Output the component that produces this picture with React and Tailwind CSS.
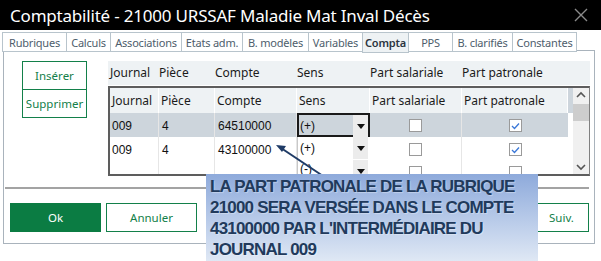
import React from "react";

const tabs = [
  { label: "Rubriques", w: 65 },
  { label: "Calculs", w: 45 },
  { label: "Associations", w: 72 },
  { label: "Etats adm.", w: 62 },
  { label: "B. modèles", w: 67 },
  { label: "Variables", w: 55 },
  { label: "Compta", w: 47, active: true },
  { label: "PPS", w: 45 },
  { label: "B. clarifiés", w: 61 },
  { label: "Constantes", w: 65 },
];

const cols = [
  { label: "Journal", w: 49 },
  { label: "Pièce", w: 56 },
  { label: "Compte", w: 82 },
  { label: "Sens", w: 73 },
  { label: "Part salariale", w: 92 },
  { label: "Part patronale", w: 106 },
];

const rows = [
  { journal: "009", piece: "4", compte: "64510000", sens: "(+)", sal: false, pat: true, selected: true },
  { journal: "009", piece: "4", compte: "43100000", sens: "(+)", sal: false, pat: true },
  { journal: "", piece: "", compte: "", sens: "(-)", sal: false, pat: false, partial: true },
];

const Check = ({ checked }) => (
  <div className="w-[13px] h-[13px] border border-[#9a9a9a] bg-white flex items-center justify-center">
    {checked && (
      <svg width="9" height="8" viewBox="0 0 9 8">
        <path d="M1 4 L3.5 6.5 L8 1.5" stroke="#3b78d8" strokeWidth="1.3" fill="none" />
      </svg>
    )}
  </div>
);

const DropBtn = () => (
  <div className="w-[15px] h-[22px] bg-[#ececec] flex items-center justify-center">
    <svg width="8" height="5" viewBox="0 0 8 5">
      <path d="M0 0 L8 0 L4 5 Z" fill="#111" />
    </svg>
  </div>
);

export default function App() {
  return (
    <div className="relative w-[601px] h-[261px] bg-white overflow-hidden font-['Noto_Sans',sans-serif]">
      {/* Barre de titre */}
      <div className="h-[30px] bg-black flex items-center justify-between pl-[10px] pr-[13px]">
        <span className="text-white text-[17px] tracking-[-0.2px] leading-none">
          Comptabilité - 21000 URSSAF Maladie Mat Inval Décès
        </span>
        <svg width="14" height="14" viewBox="0 0 14 14">
          <path d="M1 1 L13 13 M13 1 L1 13" stroke="#8a8a8a" strokeWidth="1.4" />
        </svg>
      </div>

      {/* Onglets */}
      <div className="flex pl-[2px] pt-[2px] h-[22px]">
        {tabs.map((t) => (
          <div
            key={t.label}
            style={{ width: t.w }}
            className={`border border-[#b8c4cc] -ml-px first:ml-0 flex items-center justify-center text-[11px] tracking-[-0.2px] leading-none whitespace-nowrap ${
              t.active ? "bg-[#eef2f4] font-semibold text-[#2b3440] h-[21px]" : "bg-white text-[#4e5d6c] h-[20px]"
            }`}
          >
            {t.label}
          </div>
        ))}
      </div>

      {/* Panneau */}
      <div className="ml-[3px] w-[592px] h-[194px] border border-[#a9b3bc] -mt-[2px]">
        <div className="flex pt-[10px]">
          <div className="ml-[18px] flex flex-col">
            <div className="w-[65px] h-[29px] border border-[#13804a] flex items-center justify-center text-[11.5px] text-[#13804a]">
              Insérer
            </div>
            <div className="w-[65px] h-[28px] border border-[#13804a] border-t-0 flex items-center justify-center text-[11.5px] text-[#13804a]">
              Supprimer
            </div>
          </div>

          {/* Grille */}
          <div className="ml-[21px] w-[482px]">
            <div className="flex h-[24px] bg-[#eef2f4] text-[12px] text-[#1b1b1b]">
              {cols.map((c) => (
                <div key={c.label} style={{ width: c.w }} className="flex items-center px-[2px]">
                  {c.label}
                </div>
              ))}
            </div>
            <div className="h-[90px] border-t-2 border-l-2 border-b-2 border-[#5d5d5d] border-r border-r-[#808080] flex mt-px">
              <div className="flex-1 flex flex-col">
                <div className="flex h-[26px] bg-[#eef2f4] text-[12px] text-[#1b1b1b]">
                  {cols.map((c) => (
                    <div key={c.label} style={{ width: c.w }} className="flex items-center px-[2px] border-r border-white">
                      {c.label}
                    </div>
                  ))}
                  <div className="flex-1 bg-[#cdd5dc]" />
                </div>
                {rows.map((r, i) => (
                  <div
                    key={i}
                    className={`flex text-[12px] font-['Liberation_Sans',sans-serif] text-[#111] ${
                      r.partial ? "h-[14px] overflow-hidden" : "h-[24px]"
                    } ${r.selected ? "bg-[#cdd5dc]" : "bg-white"}`}
                  >
                    <div className="w-[49px] pl-[2px] pt-[4px] border-r border-[#e6e6e6]">{r.journal}</div>
                    <div className="w-[56px] pl-[3px] pt-[4px] border-r border-[#e6e6e6]">{r.piece}</div>
                    <div className="w-[82px] pl-[3px] pt-[4px] border-r border-[#e6e6e6]">{r.compte}</div>
                    <div
                      className={`w-[73px] flex justify-between items-start ${
                        r.selected ? "border-2 border-[#1a1a1a]" : "border-l border-[#c8c8c8] pl-px pr-[2px]"
                      }`}
                    >
                      <span className={`pl-px ${r.partial ? "pt-0" : "pt-[2px]"}`}>{r.sens}</span>
                      <DropBtn />
                    </div>
                    <div className="w-[92px] flex justify-center pt-[6px] border-r border-[#e6e6e6]">
                      <Check checked={r.sal} />
                    </div>
                    <div className="w-[106px] flex justify-center pt-[6px]">
                      <Check checked={r.pat} />
                    </div>
                    <div className="flex-1 bg-white" />
                  </div>
                ))}
              </div>
              {/* Barre de défilement */}
              <div className="w-[16px] bg-[#f0f0f0] flex flex-col items-center justify-between py-[3px]">
                <div className="flex flex-col items-center w-full">
                  <svg width="10" height="7" viewBox="0 0 10 7">
                    <path d="M1 6 L5 2 L9 6" stroke="#555" strokeWidth="1.6" fill="none" />
                  </svg>
                  <div className="w-full h-[17px] bg-[#cdcdcd] mt-[6px]" />
                </div>
                <svg width="10" height="7" viewBox="0 0 10 7">
                  <path d="M1 1 L5 5 L9 1" stroke="#555" strokeWidth="1.6" fill="none" />
                </svg>
              </div>
            </div>
          </div>
        </div>

        {/* Séparateur */}
        <div className="mx-[1px] mt-[11px] h-[2px] bg-[#a3a3a3] w-[584px]" />

        {/* Boutons */}
        <div className="flex mt-[14px] pl-[6px]">
          <div className="w-[91px] h-[29px] bg-[#0b7c43] text-white text-[11.5px] flex items-center justify-center">
            Ok
          </div>
          <div className="ml-[5px] w-[91px] h-[29px] border border-[#13804a] text-[#13804a] text-[11.5px] flex items-center justify-center">
            Annuler
          </div>
          <div className="ml-auto mr-[5px] w-[90px] h-[29px] border border-[#13804a] text-[#13804a] text-[11.5px] flex items-center pl-[49px]">
            Suiv.
          </div>
        </div>
      </div>

      {/* Flèche */}
      <svg className="absolute left-0 top-0 pointer-events-none" width="601" height="261">
        <line x1="326" y1="178" x2="281" y2="148" stroke="#1f3b66" strokeWidth="2" />
        <path d="M276 145 L286 146 L282 152 Z" fill="#1f3b66" />
      </svg>

      {/* Bulle explicative */}
      <div className="absolute left-[206px] top-[174px] w-[332px] h-[90px] bg-gradient-to-b from-[#8eaadb] to-[#e2eaf5] pl-[4px] pt-[2px]">
        <div className="font-['Liberation_Sans',sans-serif] font-bold text-[17px] leading-[21px] tracking-[-0.8px] text-[#213a5c] [text-shadow:1px_1px_1px_rgba(255,255,255,0.35)]">
          <div>LA PART PATRONALE DE LA RUBRIQUE</div>
          <div>21000 SERA VERSÉE DANS LE COMPTE</div>
          <div>43100000 PAR L'INTERMÉDIAIRE DU</div>
          <div>JOURNAL 009</div>
        </div>
      </div>
    </div>
  );
}
